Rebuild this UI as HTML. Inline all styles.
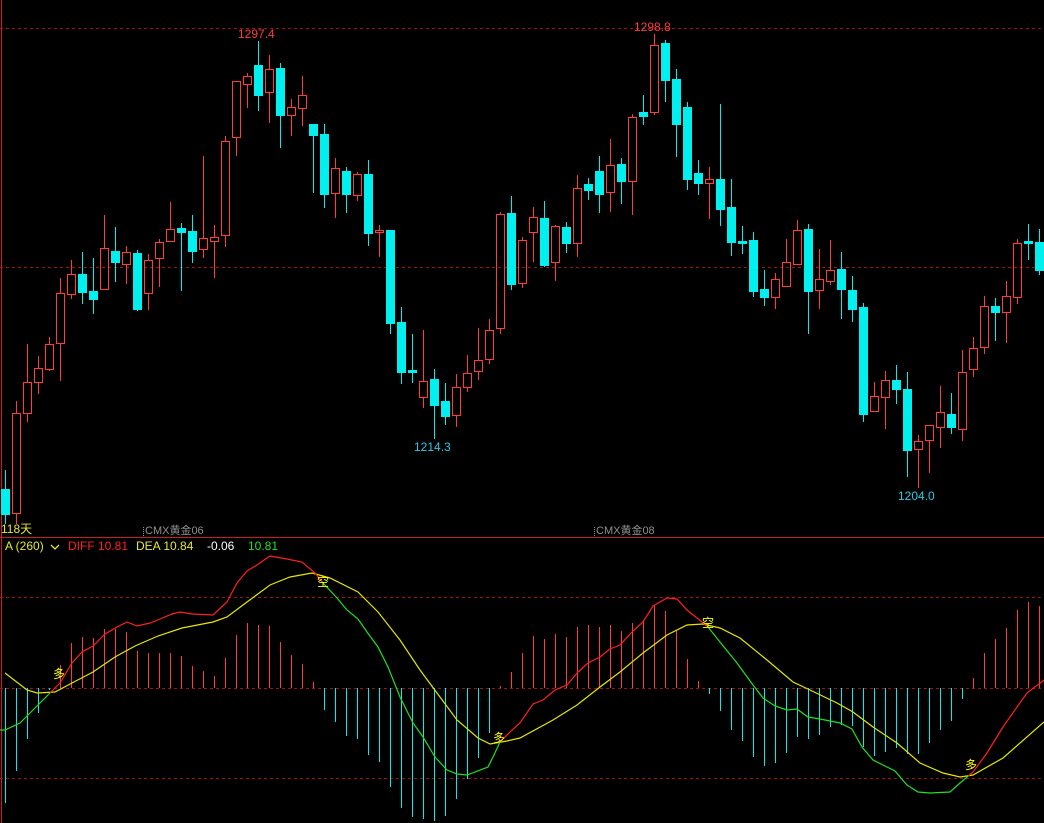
<!DOCTYPE html>
<html><head><meta charset="utf-8">
<style>
html,body{margin:0;padding:0;background:#000;width:1044px;height:823px;overflow:hidden}
svg{display:block}
text{font-family:"Liberation Sans","Noto Sans CJK SC",sans-serif}
</style></head>
<body>
<svg id="s" width="1044" height="823" viewBox="0 0 1044 823" xmlns="http://www.w3.org/2000/svg">
<rect width="1044" height="823" fill="#000"/>
<line x1="1.5" y1="0" x2="1.5" y2="823" stroke="#c81e1e" stroke-width="1"/>
<g stroke="#a01414" stroke-width="1" stroke-dasharray="3,3">
<line x1="0" y1="28.5" x2="1044" y2="28.5"/>
<line x1="0" y1="267.5" x2="1044" y2="267.5"/>
<line x1="0" y1="597.5" x2="1044" y2="597.5"/>
<line x1="0" y1="688.5" x2="1044" y2="688.5"/>
<line x1="0" y1="778.5" x2="1044" y2="778.5"/>
</g>
<line x1="0" y1="537.5" x2="1044" y2="537.5" stroke="#c81e1e" stroke-width="1"/>
<g id="cd"></g>
<g id="hb"></g>
<g id="ln"></g>
<text x="238" y="38" font-size="12" fill="#ff3c3c">1297.4</text>
<text x="634" y="31" font-size="12" fill="#ff3c3c">1298.8</text>
<text x="414" y="451" font-size="12" fill="#2cc8e8">1214.3</text>
<text x="898" y="500" font-size="12" fill="#2cc8e8">1204.0</text>
<text x="1" y="533" font-size="12" fill="#e6e632">118天</text>
<line x1="143.5" y1="527" x2="143.5" y2="537" stroke="#909090" stroke-dasharray="1,1"/>
<text x="145" y="534" font-size="11" fill="#909090">CMX黄金06</text>
<line x1="594.5" y1="527" x2="594.5" y2="537" stroke="#909090" stroke-dasharray="1,1"/>
<text x="596" y="534" font-size="11" fill="#909090">CMX黄金08</text>
<text x="5" y="550" font-size="12" fill="#e6e632">A (260)</text>
<path d="M51 545 L55 549 L59 545" stroke="#e6e632" stroke-width="1.3" fill="none"/>
<text x="68" y="550" font-size="12" fill="#ff2020">DIFF 10.81</text>
<text x="136" y="550" font-size="12" fill="#e6e632">DEA 10.84</text>
<text x="207" y="550" font-size="12" fill="#ffffff">-0.06</text>
<text x="248" y="550" font-size="12" fill="#20e020">10.81</text>
<g font-size="12" fill="#ffff00">
<text x="53" y="678">多</text>
<text x="317" y="586">空</text>
<text x="493" y="742">多</text>
<text x="702" y="627">空</text>
<text x="965" y="769">多</text>
</g>
</svg>
<script>
var C=[[0,470,489,514,523],[1,401,413,513,523],[1,344,382,413,421],[1,356,368,382,393],[1,337,344,369,370],[1,278,293,343,380],[1,260,274,294,298],[0,252,274,292,303],[0,258,291,299,313],[1,215,248,289,289],[0,227,251,262,281],[1,246,252,264,283],[0,250,253,309,310],[1,254,260,293,309],[1,239,242,258,286],[1,202,229,241,241],[0,223,228,232,290],[0,215,231,251,262],[1,156,238,249,257],[1,225,237,241,277],[1,136,141,235,246],[1,81,81,137,155],[1,73,76,84,107],[0,41,65,95,110],[1,55,69,92,122],[0,63,68,115,147],[1,99,107,115,135],[1,76,95,108,125],[0,124,124,135,192],[0,124,134,194,207],[1,158,168,193,217],[0,167,171,194,212],[1,172,174,195,200],[0,160,174,233,245],[1,225,230,232,256],[0,230,230,323,333],[0,307,322,372,383],[0,334,370,372,382],[1,330,381,397,407],[0,369,379,405,438],[0,383,401,416,424],[1,374,387,415,426],[1,355,373,387,391],[1,328,360,371,379],[1,319,330,359,363],[1,212,214,328,333],[0,196,213,284,289],[1,237,240,283,287],[1,207,217,232,261],[0,201,218,265,266],[1,225,226,262,280],[0,222,227,243,252],[1,175,188,243,256],[0,178,184,190,199],[0,156,171,194,212],[1,139,165,192,211],[0,158,164,181,203],[1,114,117,181,214],[0,95,112,116,124],[1,34,45,112,114],[0,40,43,80,101],[0,69,79,124,156],[0,102,107,179,189],[0,160,173,183,194],[1,167,179,183,218],[0,104,179,209,225],[0,179,207,242,255],[0,226,241,243,253],[0,232,240,291,296],[0,270,289,297,305],[1,273,279,297,308],[1,239,262,286,286],[1,220,230,264,264],[0,224,229,291,333],[1,249,279,290,308],[1,240,270,281,284],[0,252,269,289,318],[0,276,290,309,321],[0,303,307,414,421],[1,382,396,411,411],[1,371,380,397,428],[0,365,380,389,403],[0,372,389,450,476],[1,435,441,449,487],[1,425,425,440,472],[1,386,412,427,447],[0,393,414,427,433],[1,350,372,429,440],[1,337,348,369,376],[1,296,306,347,353],[0,298,306,312,340],[1,281,296,312,342],[1,239,243,297,303],[0,224,241,243,259],[0,229,242,270,274]];
var H=[803,771,739,713,690,665,643,637,638,629,629,632,651,653,653,653,656,666,671,676,658,635,623,625,626,642,655,664,682,710,722,736,739,755,762,787,808,817,819,821,816,799,779,758,733,686,672,653,636,639,634,637,627,625,627,625,631,623,620,605,611,630,659,681,694,711,730,741,757,766,763,753,737,739,735,727,725,726,747,756,752,748,754,754,743,730,721,699,678,653,639,628,610,602,606];
var D=[[5,730],[20,723],[50,693],[60,683],[72,663],[82,652],[93,646],[105,634],[117,627],[127,622],[137,626],[150,623],[160,619],[172,614],[180,612],[192,614],[213,615],[227,602],[237,583],[247,571],[257,565],[270,556],[287,559],[302,562],[315,573],[323,583],[337,598],[347,610],[358,619],[367,632],[378,647],[388,667],[400,697],[413,723],[423,737],[435,757],[447,770],[457,774],[467,775],[488,767],[493,757],[500,742],[510,732],[520,723],[533,704],[543,700],[555,690],[567,685],[577,673],[588,663],[600,657],[610,649],[620,645],[632,632],[643,622],[653,606],[667,598],[677,599],[687,610],[702,622],[708,627],[720,642],[737,663],[753,685],[763,698],[775,706],[787,710],[797,709],[808,717],[820,719],[840,723],[852,729],[862,747],[873,760],[895,771],[907,785],[918,792],[930,793],[950,792],[960,783],[973,772],[987,753],[1003,727],[1017,707],[1027,693],[1044,680]];
var E=[[5,673],[27,690],[37,693],[55,692],[72,683],[93,672],[115,657],[135,646],[158,636],[182,628],[213,622],[227,617],[247,602],[270,585],[290,577],[312,573],[330,578],[358,592],[378,612],[400,640],[420,670],[437,693],[457,720],[478,738],[490,744],[507,741],[520,738],[553,720],[577,705],[600,687],[620,672],[643,653],[667,635],[687,625],[703,624],[720,628],[740,638],[767,660],[793,682],[810,690],[837,703],[853,712],[873,727],[897,743],[920,763],[943,773],[960,777],[973,775],[1003,758],[1044,722]];
var NS="http://www.w3.org/2000/svg";
function el(p,t,a){var e=document.createElementNS(NS,t);for(var k in a)e.setAttribute(k,a[k]);p.appendChild(e);return e;}
var cd=document.getElementById('cd'),hb=document.getElementById('hb'),ln=document.getElementById('ln');
var RED="#ff3c3c",CY="#00f0f0";
C.forEach(function(c,i){var x=5+11*i,col=c[0]?RED:CY;
 el(cd,'line',{x1:x+.5,y1:c[1],x2:x+.5,y2:c[2],stroke:col});
 el(cd,'line',{x1:x+.5,y1:c[3],x2:x+.5,y2:c[4]+1,stroke:col});
 var h=Math.max(c[3]-c[2],1);
 if(c[0])el(cd,'rect',{x:x-3.5,y:c[2]+.5,width:8,height:h,fill:'none',stroke:col});
 else el(cd,'rect',{x:x-4,y:c[2],width:9,height:h+1,fill:col});
});
H.forEach(function(v,i){var x=5+11*i;el(hb,'line',{x1:x+.5,y1:688,x2:x+.5,y2:v,stroke:v<688?RED:CY});});
function pts(a){return a.map(function(p){return p[0]+','+p[1]}).join(' ');}
el(ln,'polyline',{points:pts(E),fill:'none',stroke:'#e6e600','stroke-width':1.2});
var segs=[[0,50,'#20e020'],[50,322,'#ff2020'],[322,500,'#20e020'],[500,707,'#ff2020'],[707,968,'#20e020'],[968,1044,'#ff2020']];
function interp(x){for(var j=0;j<D.length-1;j++){if(x>=D[j][0]&&x<=D[j+1][0]){var t=(x-D[j][0])/(D[j+1][0]-D[j][0]);return D[j][1]+t*(D[j+1][1]-D[j][1]);}}return D[D.length-1][1];}
segs.forEach(function(s){var a=[[s[0],interp(Math.max(s[0],5))]];D.forEach(function(p){if(p[0]>s[0]&&p[0]<s[1])a.push(p);});a.push([s[1],interp(s[1])]);
 el(ln,'polyline',{points:pts(a),fill:'none',stroke:s[2],'stroke-width':1.2});});
</script>
</body></html>
